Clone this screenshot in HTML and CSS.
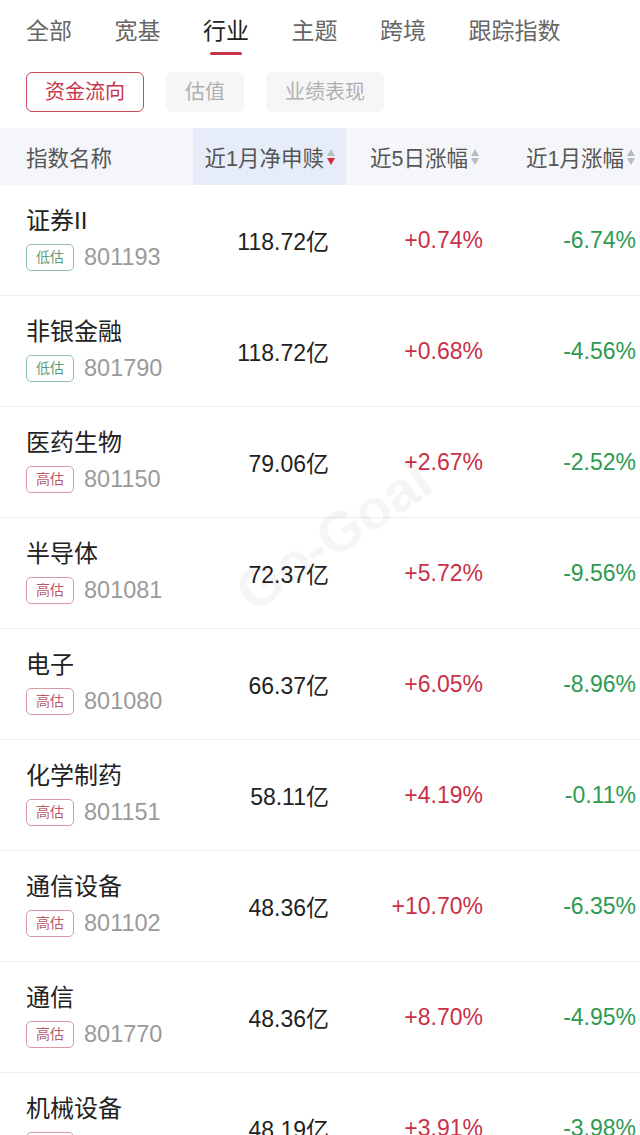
FILE: index.html
```html
<!DOCTYPE html>
<html lang="zh-CN">

<head>
    <meta charset="utf-8">
    <meta name="viewport" content="width=device-width, initial-scale=1">
    <title>行业指数</title>
    <link rel="stylesheet" href="styles.css">
</head>

<body>
<div class="page">
    <div class="tabs">
        <span class="tab">全部</span>
        <span class="tab">宽基</span>
        <span class="tab active">行业</span>
        <span class="tab">主题</span>
        <span class="tab">跨境</span>
        <span class="tab">跟踪指数</span>
    </div>

    <div class="chips">
        <span class="chip on">资金流向</span>
        <span class="chip">估值</span>
        <span class="chip">业绩表现</span>
    </div>

    <div class="grid head">
        <div class="c1">指数名称</div>
        <div class="c2 sel">近1月净申赎<i class="sort down"></i></div>
        <div class="c3">近5日涨幅<i class="sort"></i></div>
        <div class="c4">近1月涨幅<i class="sort"></i></div>
    </div>

    <div class="grid row">
        <div class="c1"><div class="name">证券II</div><div class="sub"><span class="tag low">低估</span><span class="code">801193</span></div></div>
        <div class="c2 val">118.72亿</div>
        <div class="c3 val up">+0.74%</div>
        <div class="c4 val dn">-6.74%</div>
    </div>
    <div class="grid row">
        <div class="c1"><div class="name">非银金融</div><div class="sub"><span class="tag low">低估</span><span class="code">801790</span></div></div>
        <div class="c2 val">118.72亿</div>
        <div class="c3 val up">+0.68%</div>
        <div class="c4 val dn">-4.56%</div>
    </div>
    <div class="grid row">
        <div class="c1"><div class="name">医药生物</div><div class="sub"><span class="tag high">高估</span><span class="code">801150</span></div></div>
        <div class="c2 val">79.06亿</div>
        <div class="c3 val up">+2.67%</div>
        <div class="c4 val dn">-2.52%</div>
    </div>
    <div class="grid row">
        <div class="c1"><div class="name">半导体</div><div class="sub"><span class="tag high">高估</span><span class="code">801081</span></div></div>
        <div class="c2 val">72.37亿</div>
        <div class="c3 val up">+5.72%</div>
        <div class="c4 val dn">-9.56%</div>
    </div>
    <div class="grid row">
        <div class="c1"><div class="name">电子</div><div class="sub"><span class="tag high">高估</span><span class="code">801080</span></div></div>
        <div class="c2 val">66.37亿</div>
        <div class="c3 val up">+6.05%</div>
        <div class="c4 val dn">-8.96%</div>
    </div>
    <div class="grid row">
        <div class="c1"><div class="name">化学制药</div><div class="sub"><span class="tag high">高估</span><span class="code">801151</span></div></div>
        <div class="c2 val">58.11亿</div>
        <div class="c3 val up">+4.19%</div>
        <div class="c4 val dn">-0.11%</div>
    </div>
    <div class="grid row">
        <div class="c1"><div class="name">通信设备</div><div class="sub"><span class="tag high">高估</span><span class="code">801102</span></div></div>
        <div class="c2 val">48.36亿</div>
        <div class="c3 val up">+10.70%</div>
        <div class="c4 val dn">-6.35%</div>
    </div>
    <div class="grid row">
        <div class="c1"><div class="name">通信</div><div class="sub"><span class="tag high">高估</span><span class="code">801770</span></div></div>
        <div class="c2 val">48.36亿</div>
        <div class="c3 val up">+8.70%</div>
        <div class="c4 val dn">-4.95%</div>
    </div>
    <div class="grid row">
        <div class="c1"><div class="name">机械设备</div><div class="sub"><span class="tag high">高估</span><span class="code">801890</span></div></div>
        <div class="c2 val">48.19亿</div>
        <div class="c3 val up">+3.91%</div>
        <div class="c4 val dn">-3.98%</div>
    </div>

    <div class="mark">Go-Goal</div>
</div>
</body>

</html>
```

FILE: styles.css
```css
body {
    margin: 0;
    background: #ffffff;
    font-family: "Liberation Sans", "Noto Sans CJK SC", sans-serif;
}

.page {
    position: relative;
    width: 640px;
    height: 1135px;
    overflow: hidden;
}

/* top tabs */
.tabs {
    display: flex;
    gap: 42.5px;
    padding: 19px 0 0 26px;
    height: 43px;
}

.tab {
    position: relative;
    font-size: 23px;
    line-height: 24px;
    height: 24px;
    color: #666666;
}

.tab.active {
    color: #222222;
}

.tab.active::after {
    content: "";
    position: absolute;
    left: 50%;
    top: 33px;
    width: 32px;
    height: 3px;
    margin-left: -16px;
    border-radius: 2px;
    background: #c8354a;
}

/* filter chips */
.chips {
    display: flex;
    gap: 22px;
    margin: 10px 0 16px 26px;
}

.chip {
    height: 38px;
    line-height: 38px;
    padding: 0 18px;
    border: 1px solid transparent;
    border-radius: 6px;
    background: #f6f6f6;
    font-size: 20px;
    color: #b0b0b0;
}

.chip.on {
    border-color: #c8485c;
    background: #ffffff;
    color: #c8354a;
}

/* table */
.grid {
    display: grid;
    grid-template-columns: 193px 153px 144px 150px;
}

.head {
    height: 57px;
    background: #f4f6fa;
    font-size: 21.5px;
    color: #555555;
}

.head > div {
    display: flex;
    align-items: center;
    justify-content: flex-end;
}

.head .c1 {
    justify-content: flex-start;
    padding-left: 26px;
}

.head .c2 {
    padding-right: 10px;
}

.head .c3 {
    padding-right: 10px;
}

.head .c4 {
    padding-right: 4px;
}

.head .sel {
    background: #e7edf8;
}

.sort {
    display: inline-block;
    position: relative;
    width: 9px;
    height: 16px;
    margin-left: 3px;
}

.sort::before,
.sort::after {
    content: "";
    position: absolute;
    left: 0;
    border-left: 4.5px solid transparent;
    border-right: 4.5px solid transparent;
}

.sort::before {
    top: 0;
    border-bottom: 7px solid #b9bcc2;
}

.sort::after {
    bottom: 0;
    border-top: 7px solid #b9bcc2;
}

.sort.down::after {
    border-top-color: #d6283f;
}

.row {
    height: 110px;
    border-bottom: 1px solid #eeeeee;
}

.row > div {
    display: flex;
    align-items: center;
    justify-content: flex-end;
}

.row .c1 {
    flex-direction: column;
    align-items: flex-start;
    justify-content: flex-start;
    padding: 21px 0 0 26px;
}

.name {
    font-size: 24px;
    line-height: 30px;
    color: #222222;
}

.sub {
    display: flex;
    align-items: center;
    margin-top: 8px;
}

.tag {
    height: 25px;
    line-height: 25px;
    padding: 0 9px;
    border: 1px solid;
    border-radius: 5px;
    font-size: 14px;
}

.tag.low {
    border-color: #93c3a7;
    color: #5e9d7a;
}

.tag.high {
    border-color: #d89aa5;
    color: #b65c6c;
}

.code {
    margin-left: 10px;
    font-size: 23.5px;
    color: #9a9a9a;
}

.val {
    font-size: 23px;
    color: #222222;
}

.row .c2 {
    padding-right: 17px;
}

.row .c3 {
    padding-right: 7px;
}

.row .c4 {
    padding-right: 4px;
}

.up {
    color: #c9304a;
}

.row .dn {
    color: #2e9a52;
}

/* faint watermark over the table */
.mark {
    position: absolute;
    left: 223px;
    top: 503px;
    transform: rotate(-34deg);
    font-size: 56px;
    font-weight: bold;
    color: rgba(0, 0, 0, 0.04);
    pointer-events: none;
}
```
